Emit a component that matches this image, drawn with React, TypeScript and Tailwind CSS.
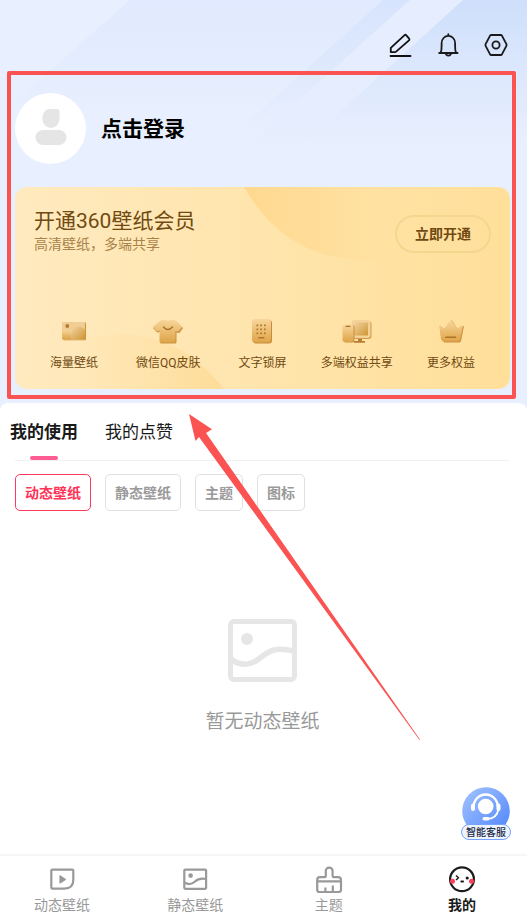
import type { ReactNode } from "react";

const benefits = [
  { label: "海量壁纸", icon: <PhotoIcon /> },
  { label: "微信QQ皮肤", icon: <ShirtIcon /> },
  { label: "文字锁屏", icon: <LockScreenIcon /> },
  { label: "多端权益共享", icon: <DevicesIcon /> },
  { label: "更多权益", icon: <CrownIcon /> },
];

const filters = ["动态壁纸", "静态壁纸", "主题", "图标"];

export default function App() {
  return (
    <div className="relative flex min-h-screen flex-col overflow-hidden bg-[#e8effe] font-['Roboto','Noto_Sans_CJK_SC',sans-serif] text-black">
      <Backdrop />

      {/* Header */}
      <header className="relative flex justify-end gap-6 pt-[33px] pr-[19px] pb-[14px]">
        <button type="button" aria-label="编辑">
          <svg viewBox="0 0 24 24" className="h-6 w-6" fill="none" stroke="#111" strokeWidth="1.8" strokeLinejoin="round" strokeLinecap="round">
            <path d="M2.800 19v-4.200L16.600 2.200q.9-.8 1.700.1l2.900 3.400q.7.900-.2 1.700L8.100 18.600q-.5.500-1.300.5H2.800Z" />
            <path d="M2.500 23h20" />
          </svg>
        </button>
        <button type="button" aria-label="通知">
          <svg viewBox="0 0 24 24" className="h-6 w-6" fill="none" stroke="#1a1a1a" strokeWidth="1.8" strokeLinejoin="round" strokeLinecap="round">
            <path d="M12.300 1.200v1.200M3.200 20h18.400M4.700 19.600c1.200-2.600.9-5.400.9-9.400a6.700 7.300 0 0 1 13.500 0c0 4-.3 6.800.9 9.400M10 21.300q2.400 2.600 4.800 0" />
          </svg>
        </button>
        <button type="button" aria-label="设置">
          <svg viewBox="0 0 24 24" className="h-6 w-6" fill="none" stroke="#1a1a1a" strokeWidth="1.8" strokeLinejoin="round">
            <path d="M7.200 2h9.600q.7 0 1.100.6l4.500 8.600q.4.800 0 1.600l-4.500 8.600q-.4.600-1.100.6H7.200q-.7 0-1.100-.6L1.600 12.800q-.4-.8 0-1.600l4.500-8.600Q6.500 2 7.200 2Z" />
            <circle cx="12" cy="12" r="3.600" />
          </svg>
        </button>
      </header>

      {/* Account and membership */}
      <section className="relative mr-[11px] ml-[7px] rounded-[2px] border-4 border-[#fb5252] pt-[18px] pr-[2px] pb-[6px] pl-1">
        <button type="button" className="flex items-center gap-[15px]">
          <span className="flex h-[71px] w-[71px] items-center justify-center rounded-full bg-white">
            <svg viewBox="0 0 32 36" className="mb-1 h-9 w-8" fill="#e5e5e5">
              <path d="M16 0h6q2.500 0 2.500 2.500V9.500a8.600 9.500 0 1 1-17.200 0Q7.400 0 16 0Z" />
              <rect x="0.500" y="21" width="31" height="15" rx="7.500" />
            </svg>
          </span>
          <span className="text-[21px] leading-7 font-bold">点击登录</span>
        </button>

        <div className="relative mt-[23px] overflow-hidden rounded-[12px] bg-linear-to-r from-[#ffeabf] to-[#ffdf99]">
          <CardShapes />
          <div className="relative flex items-end justify-between px-[19px] pt-5">
            <div>
              <h2 className="text-[21px] leading-7 text-[#704a12]">开通360壁纸会员</h2>
              <p className="text-[14px] leading-[18px] text-[#a98349]">高清壁纸，多端共享</p>
            </div>
            <button type="button" className="h-[38px] rounded-full border-2 border-[#f4d78f] px-[18px] text-[14px] font-bold text-[#704a12]">
              立即开通
            </button>
          </div>
          <ul className="relative mt-16 grid grid-cols-5 px-3 pb-[17px]">
            {benefits.map((item) => (
              <li key={item.label} className="flex flex-col items-center gap-[9px]">
                {item.icon}
                <span className="text-[12px] leading-[18px] whitespace-nowrap text-[#704a12]">{item.label}</span>
              </li>
            ))}
          </ul>
        </div>
      </section>

      {/* My content */}
      <main className="relative mt-1 flex-1 rounded-t-[8px] bg-white">
        <div className="flex gap-[27px] pl-[10px]">
          <button type="button" className="relative h-[57px] pt-[3px] text-[17px] font-bold text-[#1a1a1a]">
            我的使用
            <span className="absolute bottom-0 left-5 h-1 w-7 rounded-full bg-[#ff5c93]" />
          </button>
          <button type="button" className="h-[57px] pt-[3px] text-[17px] text-[#1a1a1a]">我的点赞</button>
        </div>
        <div className="mr-[18px] ml-[15px] border-t border-[#f0f0f0]" />

        <div className="flex gap-[14px] px-[15px] pt-[13px]">
          {filters.map((name, i) => (
            <button
              key={name}
              type="button"
              className={`h-[37px] rounded-[5px] border px-[9px] pt-px text-[14px] font-bold ${
                i === 0 ? "border-[#ff3b5c] text-[#ff3355]" : "border-[#e0e0e0] text-[#9a9a9a]"
              }`}
            >
              {name}
            </button>
          ))}
        </div>

        <div className="flex flex-col items-center gap-[26px] pt-[108px] pr-[2px]">
          <svg viewBox="0 0 69 63" className="h-[63px] w-[69px]" fill="none" stroke="#e6e6e6" strokeWidth="5">
            <rect x="2.500" y="2.500" width="64" height="58" rx="3.500" />
            <path d="M3 40C12 47 22 47 32 39S48 28 66 32" strokeWidth="5.500" />
            <circle cx="19" cy="20" r="6" fill="#e6e6e6" stroke="none" />
          </svg>
          <p className="text-[19px] leading-7 text-[#999]">暂无动态壁纸</p>
        </div>

        <ServiceButton />
      </main>

      {/* Bottom navigation */}
      <nav className="relative flex justify-between border-t-2 border-[#f6f6f6] bg-white pt-[11px] pr-[37px] pb-2 pl-[34px]">
        <NavItem label="动态壁纸">
          <path d="M2.300 3.600q0-1 1-1h20q1 0 1 1V13q0 8.600-9 8.600h-12q-1 0-1-1Z" />
          <path d="M11 8.800v7.200l5.400-3.600Z" fill="#999" strokeWidth="1.200" />
        </NavItem>
        <NavItem label="静态壁纸">
          <rect x="2.300" y="2.600" width="21.800" height="19.200" rx="1" />
          <path d="M3 15.800c4 2.400 7.200 1.300 10-1.300s5.800-3.700 11-2.500" />
          <circle cx="8.600" cy="8.600" r="2.300" fill="#999" stroke="none" />
        </NavItem>
        <NavItem label="主题">
          <path d="M3.700 10.200h4.300q1.800 0 1.800-1.800V4a3.400 3.400 0 0 1 6.800 0v4.400q0 1.800 1.800 1.800H22q3 0 3 3v9.600q0 2.200-2.200 2.200H3.400q-2.200 0-2.200-2.200v-9.600q0-3 2.500-3Z" />
          <path d="M1.200 14.300H25M9.400 20.500v4M16.800 18.500v6" />
        </NavItem>
        <NavItem label="我的" active>
          <circle cx="13" cy="12.300" r="11.900" fill="#fff" stroke="#1c1c1c" strokeWidth="2.200" />
          <circle cx="3.500" cy="14.300" r="2.500" fill="#ff3f5b" stroke="none" />
          <circle cx="22.500" cy="14.300" r="2.500" fill="#ff3f5b" stroke="none" />
          <path d="m7 8.500 2.500 2.300L7 13" stroke="#1c1c1c" strokeWidth="1.500" />
          <circle cx="18.200" cy="11" r="1.600" fill="#1c1c1c" stroke="none" />
          <path d="M12.300 14.500h1.800" stroke="#1c1c1c" strokeWidth="1.800" strokeLinecap="round" />
        </NavItem>
      </nav>

      {/* Pointer towards the account block */}
      <svg viewBox="0 0 232 328" className="pointer-events-none absolute top-[413px] left-[188px] h-[328px] w-[232px]" fill="#fb5252">
        <path d="M1 1 24 16.300 18 20 232 326.500 231.500 327 11 24 7.500 28Z" />
      </svg>
    </div>
  );
}

function NavItem({ label, active, children }: { label: string; active?: boolean; children: ReactNode }) {
  return (
    <a
      href="#"
      className={`flex w-14 flex-col items-center gap-1 text-[14px] leading-4 whitespace-nowrap ${active ? "font-bold text-[#1a1a1a]" : "text-[#999]"}`}
    >
      <svg viewBox="0 0 26 26" className="h-[26px] w-[26px] overflow-visible" fill="none" stroke="#999" strokeWidth="2.2" strokeLinejoin="round">
        {children}
      </svg>
      {label}
    </a>
  );
}

function ServiceButton() {
  return (
    <button type="button" className="absolute right-4 bottom-[14px] flex w-[50px] flex-col items-center">
      <svg viewBox="0 0 48 48" className="h-12 w-12" fill="none">
        <defs>
          <linearGradient id="service" x1="0" y1="0" x2="1" y2="1">
            <stop offset="0" stopColor="#a5c4ff" />
            <stop offset="1" stopColor="#4d83fb" />
          </linearGradient>
        </defs>
        <circle cx="24" cy="24" r="23.800" fill="url(#service)" />
        <circle cx="23.700" cy="19.500" r="7.800" fill="#fff" />
        <path d="M11.700 19.500a12 12 0 0 1 24 0" stroke="#fff" strokeWidth="2.400" />
        <path d="M36.500 22c-1 6-5 10-12 10" stroke="#fff" strokeWidth="1.800" />
        <rect x="9" y="16.500" width="4" height="7.500" rx="2" fill="#fff" />
        <rect x="34.500" y="16.500" width="4" height="7.500" rx="2" fill="#fff" />
        <rect x="20.500" y="30" width="7" height="3.600" rx="1.800" fill="#fff" />
      </svg>
      <span className="-mt-[11px] h-4 w-[50px] rounded-full border border-[#77a2fd] bg-[#edf3ff] text-[10px] leading-[15px] font-medium whitespace-nowrap text-[#222b45]">
        智能客服
      </span>
    </button>
  );
}

function Backdrop() {
  return (
    <svg viewBox="0 0 527 200" preserveAspectRatio="none" className="absolute top-0 left-0 h-[200px] w-full">
      <defs>
        <linearGradient id="mid" gradientUnits="userSpaceOnUse" x1="0" y1="0" x2="0" y2="110">
          <stop offset="0" stopColor="#e1eafe" />
          <stop offset="0.600" stopColor="#e4edfe" />
          <stop offset="1" stopColor="#e8effe" />
        </linearGradient>
        <linearGradient id="band" gradientUnits="userSpaceOnUse" x1="0" y1="0" x2="0" y2="130">
          <stop offset="0" stopColor="#d7e4fd" />
          <stop offset="0.500" stopColor="#dee9fd" />
          <stop offset="1" stopColor="#e8effe" />
        </linearGradient>
        <linearGradient id="corner" gradientUnits="userSpaceOnUse" x1="0" y1="0" x2="0" y2="150">
          <stop offset="0" stopColor="#cedffb" />
          <stop offset="0.500" stopColor="#dde8fd" />
          <stop offset="1" stopColor="#e8effe" />
        </linearGradient>
      </defs>
      <path d="M130 0H527V200H0V115Z" fill="url(#mid)" />
      <path d="M383 0H410L266 130H239Z" fill="url(#band)" />
      <path d="M410 0H463L298 150H244Z" fill="#e5edfe" />
      <path d="M463 0H527V150H298Z" fill="url(#corner)" />
      <path d="M200 110H527V200H200Z" fill="url(#fade)" />
      <defs>
        <linearGradient id="fade" gradientUnits="userSpaceOnUse" x1="0" y1="110" x2="0" y2="150">
          <stop offset="0" stopColor="#e8effe" stopOpacity="0" />
          <stop offset="1" stopColor="#e8effe" />
        </linearGradient>
      </defs>
    </svg>
  );
}

function CardShapes() {
  return (
    <svg viewBox="0 0 495 202" preserveAspectRatio="none" className="absolute inset-0 h-full w-full">
      <defs>
        <linearGradient id="arcTop" x1="0" y1="0" x2="1" y2="0">
          <stop offset="0" stopColor="#ffd88e" />
          <stop offset="0.350" stopColor="#ffdd98" stopOpacity="0.800" />
          <stop offset="0.650" stopColor="#ffe09d" stopOpacity="0" />
        </linearGradient>
        <linearGradient id="arcBottom" x1="0" y1="0" x2="1" y2="0">
          <stop offset="0.200" stopColor="#ffe2a8" stopOpacity="0" />
          <stop offset="1" stopColor="#fedc99" />
        </linearGradient>
      </defs>
      <path d="M229 0C250 36 285 74 355 73C410 73 450 40 470 0Z" fill="url(#arcTop)" />
      <path d="M20 202C35 160 70 147 105 147C150 147 184 170 209 202Z" fill="url(#arcBottom)" />
    </svg>
  );
}

function PhotoIcon() {
  return (
    <svg viewBox="0 0 28 28" className="h-7 w-7">
      <defs>
        <linearGradient id="gold" x1="0" y1="0" x2="0" y2="1">
          <stop offset="0" stopColor="#f8d69c" />
          <stop offset="1" stopColor="#dea448" />
        </linearGradient>
        <linearGradient id="hill" x1="0" y1="0" x2="1" y2="1">
          <stop offset="0" stopColor="#f2d3a0" />
          <stop offset="1" stopColor="#cf9534" />
        </linearGradient>
      </defs>
      <rect x="3" y="5.500" width="23" height="17.800" rx="1" fill="#cb923c" />
      <rect x="2" y="5" width="23" height="17.500" rx="1" fill="#efcd95" />
      <path d="M2 14q4-3 8 0l2 8.500H3.500Q2 22.500 2 21Z" fill="url(#gold)" />
      <path d="M12 22.500q-2.500-6 1.500-10.500 5-4.500 9.500-1l2 2v8.500q0 1-1 1Z" fill="url(#hill)" />
      <circle cx="7.300" cy="9" r="1.900" fill="#b87a2c" />
    </svg>
  );
}

function ShirtIcon() {
  return (
    <svg viewBox="0 0 30 28" className="h-7 w-[30px]">
      <path d="m8 4 3-1q4 2.500 8 0l4 1.500 7 6.500-3.500 5-3-.5V25q0 1.500-1.500 1.500H8.500Q7 26.500 7 25V15l-3 .5L0 11Z" fill="#ca9140" />
      <path d="m7.500 3.500 3-1q4.500 2.500 9 0l3 1L29 10l-3.500 4.500-3-.5v10.500q0 1-1 1h-14q-1 0-1-1V14l-3 .5L0 10Z" fill="url(#gold)" />
      <path d="M10.500 10q4.300 5 9 0" fill="none" stroke="#ae7327" strokeWidth="1.500" strokeLinecap="round" />
    </svg>
  );
}

function LockScreenIcon() {
  return (
    <svg viewBox="0 0 28 28" className="h-7 w-7">
      <rect x="5" y="3" width="19" height="23.500" rx="3" fill="#ca8b38" />
      <rect x="4" y="2" width="19" height="23.500" rx="3" fill="url(#gold)" />
      <g fill="#b27629">
        {[7.5, 11.5, 15.5].map((y) =>
          [8.5, 12.2, 16].map((x) => <rect key={`${x}-${y}`} x={x} y={y} width="1.700" height="1.700" />)
        )}
        <rect x="10" y="20" width="6.500" height="1.600" rx="0.800" />
      </g>
    </svg>
  );
}

function DevicesIcon() {
  return (
    <svg viewBox="0 0 30 28" className="h-7 w-[30px]">
      <path d="M16 20h4v4h3v1.800H12V24h4Z" fill="#b97d31" />
      <rect x="10.500" y="4" width="19" height="18" rx="3" fill="#cf994a" />
      <rect x="9.500" y="3" width="19" height="18" rx="3" fill="#f4d195" />
      <rect x="12" y="5.500" width="14" height="13" rx="1" fill="url(#hill)" />
      <rect x="1.500" y="8" width="11" height="17.500" rx="2.500" fill="#c98f3f" />
      <rect x="0.500" y="7.500" width="11" height="17.500" rx="2.500" fill="url(#gold)" />
      <path d="M4 9.300h4" stroke="#ac742b" strokeWidth="1.200" strokeLinecap="round" />
    </svg>
  );
}

function CrownIcon() {
  return (
    <svg viewBox="0 0 28 28" className="h-7 w-7">
      <path d="m3 9 4.500 3 6-8q1-1 2 0l5 8.300L25.500 9q1.500-.5 1.300 1L24 24q-.4 1.500-2 1.500H7.500L4 22Z" fill="#ca9142" />
      <path d="m2 8.500 5.500 3L13 4q1-1 2 0l5 7.500L25 8.600q1-.4.800.8L23 23q-.3 1.500-1.800 1.500H6.500Q5 24.500 4.700 23Z" fill="url(#gold)" />
      <path d="M8.800 20.300h9.700" stroke="#ae7428" strokeWidth="1.600" strokeLinecap="round" />
    </svg>
  );
}
